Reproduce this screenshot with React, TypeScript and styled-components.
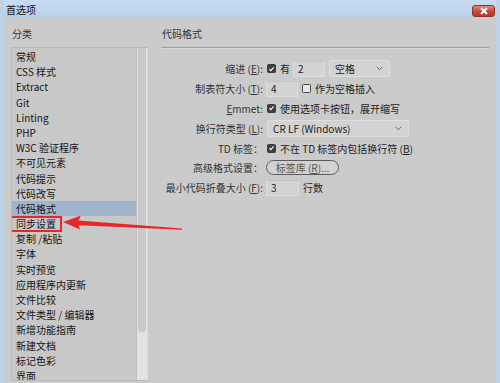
import React from "react";
import styled, { createGlobalStyle } from "styled-components";

const GlobalStyle = createGlobalStyle`
  html, body {
    margin: 0;
    padding: 0;
    background: #bcd3ec;
    overflow: hidden;
  }
  body {
    font-family: "Noto Sans CJK SC", "Noto Sans", sans-serif;
    font-size: 10px;
    color: #222;
  }
`;

const categories = [
  "常规",
  "CSS 样式",
  "Extract",
  "Git",
  "Linting",
  "PHP",
  "W3C 验证程序",
  "不可见元素",
  "代码提示",
  "代码改写",
  "代码格式",
  "同步设置",
  "复制 /粘贴",
  "字体",
  "实时预览",
  "应用程序内更新",
  "文件比较",
  "文件类型 / 编辑器",
  "新增功能指南",
  "新建文档",
  "标记色彩",
  "界面",
];

const Check: React.FC<{ checked?: boolean }> = ({ checked }) => (
  <CheckBox $checked={checked}>
    {checked && (
      <svg width="8" height="8" viewBox="0 0 8 8">
        <path d="M1.6 4.1 L3.3 5.8 L6.4 2.2" fill="none" stroke="#fff" strokeWidth="1.3" />
      </svg>
    )}
  </CheckBox>
);

const Chevron = () => (
  <svg width="7" height="5" viewBox="0 0 7 5">
    <path d="M0.8 1 L3.5 3.7 L6.2 1" fill="none" stroke="#555" strokeWidth="0.9" />
  </svg>
);

const App: React.FC = () => {
  return (
    <>
      <GlobalStyle />
      <Window>
        <TitleBar>
          <Title>首选项</Title>
          <CloseButton>
            <svg width="10" height="8" viewBox="0 0 10 8">
              <path d="M2 1 L8 7 M8 1 L2 7" stroke="#fff" strokeWidth="2" />
            </svg>
          </CloseButton>
        </TitleBar>
        <Body>
          <Sidebar>
            <PaneHeading>分类</PaneHeading>
            <ListBox>
              <ListItems>
                {categories.map((name, i) => (
                  <ListItem key={name} $selected={i === 10} $marked={i === 11}>
                    {name}
                  </ListItem>
                ))}
              </ListItems>
              <ScrollTrack>
                <ScrollThumb />
              </ScrollTrack>
            </ListBox>
          </Sidebar>
          <Main>
            <PaneHeading>代码格式</PaneHeading>
            <Separator />
            <Form>
              <Label>
                缩进 (<u>E</u>):
              </Label>
              <Controls>
                <Check checked />
                <Text>有</Text>
                <Input $width={32}>2</Input>
                <Select $width={61}>
                  <span>空格</span>
                  <Chevron />
                </Select>
              </Controls>

              <Label>
                制表符大小 (<u>T</u>):
              </Label>
              <Controls>
                <Input $width={32}>4</Input>
                <Check />
                <Text>作为空格插入</Text>
              </Controls>

              <Label>
                <u>E</u>mmet:
              </Label>
              <Controls>
                <Check checked />
                <Text>使用选项卡按钮，展开缩写</Text>
              </Controls>

              <Label>
                换行符类型 (<u>L</u>):
              </Label>
              <Controls>
                <Select $width={142}>
                  <span>CR LF (Windows)</span>
                  <Chevron />
                </Select>
              </Controls>

              <Label>TD 标签：</Label>
              <Controls>
                <Check checked />
                <Text>
                  不在 TD 标签内包括换行符 (<u>B</u>)
                </Text>
              </Controls>

              <Label>高级格式设置：</Label>
              <Controls>
                <PillButton>
                  标签库 (<u>R</u>)...
                </PillButton>
              </Controls>

              <Label>
                最小代码折叠大小 (<u>F</u>):
              </Label>
              <Controls>
                <Input $width={33}>3</Input>
                <Text>行数</Text>
              </Controls>
            </Form>
          </Main>
        </Body>
        <Arrow width="500" height="383" viewBox="0 0 500 383">
          <polygon
            points="63,222 81,215.5 78.5,220.6 182,228.4 182,229.8 78.5,225.2 80,229.5"
            fill="#e8262a"
          />
        </Arrow>
      </Window>
    </>
  );
};

export default App;

const Window = styled.div`
  position: relative;
  width: 500px;
  height: 383px;
  display: flex;
  flex-direction: column;
  padding: 0 4px;
  box-sizing: border-box;
  background: #bcd3ec;
`;

const TitleBar = styled.div`
  height: 18px;
  flex: none;
  display: flex;
  align-items: center;
  justify-content: space-between;
  padding: 0 2px 0 2px;
  background: linear-gradient(#c8dcf1, #b9d0ea);
`;

const Title = styled.div`
  font-size: 10px;
  line-height: 12px;
  color: #111;
  margin-top: 1px;
`;

const CloseButton = styled.div`
  width: 23px;
  height: 12px;
  margin-right: -1px;
  margin-top: 3px;
  box-sizing: border-box;
  border: 1px solid #8e3328;
  border-radius: 3px;
  background: linear-gradient(#e0887c, #c6483a 55%, #b93a2c);
  display: flex;
  align-items: center;
  justify-content: center;
`;

const Body = styled.div`
  flex: 1;
  display: flex;
  background: #cbcbcb;
  padding-left: 7px;
  min-height: 0;
`;

const Sidebar = styled.div`
  width: 137px;
  display: flex;
  flex-direction: column;
`;

const Main = styled.div`
  flex: 1;
  margin-left: 13px;
  margin-right: 7px;
  display: flex;
  flex-direction: column;
`;

const PaneHeading = styled.div`
  height: 29px;
  display: flex;
  align-items: center;
  padding-left: 1px;
  padding-top: 1px;
  box-sizing: border-box;
  font-size: 10px;
  color: #333;
`;

const ListBox = styled.div`
  flex: 1;
  display: flex;
  border: 1px solid #b9b9b9;
  border-right-color: #d8d8d8;
  background: #c8c8c8;
  margin-bottom: 2px;
  overflow: hidden;
`;

const ListItems = styled.div`
  flex: 1;
  padding-top: 1px;
`;

const ListItem = styled.div<{ $selected?: boolean; $marked?: boolean }>`
  position: relative;
  height: 15.2px;
  line-height: 15.2px;
  padding-left: 4px;
  font-size: 10px;
  color: #151515;
  white-space: nowrap;
  background: ${(p) => (p.$selected ? "#a0b4cc" : "transparent")};

  &::after {
    content: "";
    display: ${(p) => (p.$marked ? "block" : "none")};
    position: absolute;
    left: -2px;
    top: 0px;
    width: 52px;
    height: 16px;
    box-sizing: border-box;
    border: 2px solid #e8262a;
  }
`;

const ScrollTrack = styled.div`
  width: 10px;
  display: flex;
  flex-direction: column;
  background: #e2e2e2;
  border-left: 1px solid #bdbdbd;
`;

const ScrollThumb = styled.div`
  height: 285px;
  box-sizing: border-box;
  background: #c9c9c9;
  border: 1px solid #e4e4e4;
  border-top: none;
  border-radius: 0 0 4px 4px;
`;

const Separator = styled.div`
  height: 1px;
  background: #9c9c9c;
  box-shadow: 0 1px 0 #dadada;
`;

const Form = styled.div`
  display: grid;
  grid-template-columns: 102px 1fr;
  grid-auto-rows: 19.8px;
  column-gap: 3px;
  margin-top: 11px;
  align-items: center;
`;

const Label = styled.div`
  text-align: right;
  white-space: nowrap;
  font-size: 10px;
  color: #333;

  u {
    text-underline-offset: 1px;
  }
`;

const Controls = styled.div`
  display: flex;
  align-items: center;
  gap: 3px;
  white-space: nowrap;
`;

const Text = styled.span`
  font-size: 10px;
  color: #222;
  margin-left: 1px;
`;

const CheckBox = styled.span<{ $checked?: boolean }>`
  width: 9px;
  height: 9px;
  margin-left: 1px;
  box-sizing: border-box;
  border-radius: 1.5px;
  display: inline-flex;
  align-items: center;
  justify-content: center;
  background: ${(p) => (p.$checked ? "#3d3d3d" : "#e6e6e6")};
  border: 1px solid ${(p) => (p.$checked ? "#3d3d3d" : "#4a4a4a")};
`;

const Input = styled.div<{ $width: number }>`
  width: ${(p) => p.$width}px;
  height: 16px;
  box-sizing: border-box;
  padding-left: 4px;
  line-height: 14px;
  font-size: 10px;
  color: #222;
  background: #d3d3d3;
  border: 1px solid #dedede;
  border-top-color: #c2c2c2;
`;

const Select = styled.div<{ $width: number }>`
  width: ${(p) => p.$width}px;
  height: 17px;
  box-sizing: border-box;
  padding: 0 6px 0 5px;
  margin-left: 1px;
  display: flex;
  align-items: center;
  justify-content: space-between;
  font-size: 10px;
  color: #222;
  background: #d3d3d3;
  border: 1px solid #dedede;
  border-radius: 2px;
`;

const PillButton = styled.div`
  width: 73px;
  height: 15px;
  box-sizing: border-box;
  display: flex;
  align-items: center;
  justify-content: center;
  font-size: 10px;
  color: #555;
  background: #d2d2d2;
  border: 1px solid #5a5a5a;
  border-radius: 8px;
`;

const Arrow = styled.svg`
  position: absolute;
  left: 0;
  top: 0;
  pointer-events: none;
`;
